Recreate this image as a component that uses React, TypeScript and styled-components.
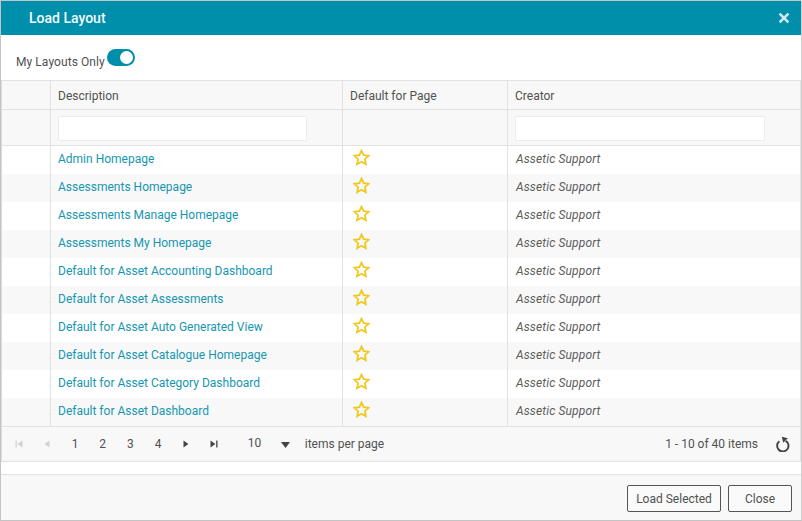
import { ReactElement } from 'react'
import styled, { createGlobalStyle } from 'styled-components'

const teal = '#008fab'
const line = '#e2e2e2'
const text = '#515151'

const layouts = [
  'Admin Homepage',
  'Assessments Homepage',
  'Assessments Manage Homepage',
  'Assessments My Homepage',
  'Default for Asset Accounting Dashboard',
  'Default for Asset Assessments',
  'Default for Asset Auto Generated View',
  'Default for Asset Catalogue Homepage',
  'Default for Asset Category Dashboard',
  'Default for Asset Dashboard',
]

const GlobalStyle = createGlobalStyle`
  html, body {
    margin: 0;
    padding: 0;
    background: #fff;
  }
  * {
    box-sizing: border-box;
  }
`

const StarIcon = () => (
  <StarSvg viewBox="0 0 17 17" width="17" height="17">
    <path
      d="M8.5 1.6l2.1 4.6 5 .6-3.7 3.4 1 5L8.5 12.8l-4.4 2.4 1-5L1.4 6.8l5-.6z"
      fill="none"
      stroke="#f2c81e"
      strokeWidth="1.8"
      strokeLinejoin="miter"
    />
  </StarSvg>
)

const PagerArrow = ({ kind, disabled }: { kind: 'first' | 'prev' | 'next' | 'last'; disabled?: boolean }) => (
  <PagerButton $disabled={disabled}>
    <svg viewBox="0 0 10 10" width="10" height="10" fill="currentColor">
      {kind === 'first' && <path d="M1.5 1.5h1.3v7H1.5zM8.5 1.5v7L3.6 5z" />}
      {kind === 'prev' && <path d="M7.5 1.5v7L2.6 5z" />}
      {kind === 'next' && <path d="M2.5 1.5v7L7.4 5z" />}
      {kind === 'last' && <path d="M8.5 1.5H7.2v7h1.3zM1.5 1.5v7L6.4 5z" />}
    </svg>
  </PagerButton>
)

const App = (): ReactElement => (
  <>
    <GlobalStyle />
    <Dialog>
      <TitleBar>
        <Title>Load Layout</Title>
        <CloseIcon viewBox="0 0 12 12" width="12" height="12">
          <path d="M1.6 1.6l8.8 8.8M10.4 1.6l-8.8 8.8" stroke="#cfe9ef" strokeWidth="2.6" fill="none" />
        </CloseIcon>
      </TitleBar>

      <Toolbar>
        <ToggleLabel>My Layouts Only</ToggleLabel>
        <Toggle>
          <ToggleKnob />
        </Toggle>
      </Toolbar>

      <Grid>
        <HeaderRow>
          <SelectCell />
          <DescriptionCell>Description</DescriptionCell>
          <DefaultCell>Default for Page</DefaultCell>
          <CreatorCell>Creator</CreatorCell>
        </HeaderRow>
        <FilterRow>
          <SelectCell />
          <DescriptionCell>
            <FilterInput $width={249} />
          </DescriptionCell>
          <DefaultCell />
          <CreatorCell>
            <FilterInput $width={250} />
          </CreatorCell>
        </FilterRow>
        {layouts.map((name, i) => (
          <DataRow key={name} $alt={i % 2 === 1}>
            <SelectCell />
            <DescriptionCell>
              <LayoutLink>{name}</LayoutLink>
            </DescriptionCell>
            <StarCell>
              <StarIcon />
            </StarCell>
            <CreatorCell>
              <CreatorName>Assetic Support</CreatorName>
            </CreatorCell>
          </DataRow>
        ))}
        <Pager>
          <PagerArrow kind="first" disabled />
          <PagerArrow kind="prev" disabled />
          {[1, 2, 3, 4].map(n => (
            <PageNumber key={n}>{n}</PageNumber>
          ))}
          <PagerArrow kind="next" />
          <PagerArrow kind="last" />
          <PageSize>
            <span>10</span>
            <svg viewBox="0 0 9 6" width="9" height="6" fill="#444">
              <path d="M0 0h9L4.5 6z" />
            </svg>
          </PageSize>
          <PagerText>items per page</PagerText>
          <PagerInfo>1 - 10 of 40 items</PagerInfo>
          <RefreshIcon viewBox="0 0 16 16" width="16" height="16">
            <path d="M4.4 5.2A5.7 5.7 0 1 0 10.6 4.8" fill="none" stroke="#444" strokeWidth="1.9" />
            <path d="M6.8 0.8l6 1.4-4.6 4.6z" fill="#444" />
          </RefreshIcon>
        </Pager>
      </Grid>

      <Footer>
        <FooterButton>Load Selected</FooterButton>
        <FooterButton $narrow>Close</FooterButton>
      </Footer>
    </Dialog>
  </>
)

export default App

const Dialog = styled.div`
  display: flex;
  flex-direction: column;
  width: 802px;
  height: 521px;
  border: 1px solid #c4c4c4;
  border-right-color: #d0d0d0;
  background: #fff;
  color: ${text};
  font-family: Roboto, 'Liberation Sans', sans-serif;
  font-size: 12px;
  overflow: hidden;
`

const TitleBar = styled.div`
  display: flex;
  align-items: center;
  justify-content: space-between;
  height: 34px;
  padding: 0 11px 0 28px;
  background: ${teal};
  flex: none;
`

const Title = styled.div`
  color: #f4fbfc;
  font-size: 14px;
  font-weight: 500;
`

const CloseIcon = styled.svg`
  display: block;
`

const Toolbar = styled.div`
  display: flex;
  align-items: flex-start;
  gap: 2px;
  height: 45px;
  padding: 14px 0 0 15px;
  flex: none;
`

const ToggleLabel = styled.span`
  margin-top: 6px;
  line-height: 14px;
  letter-spacing: 0.07px;
`

const Toggle = styled.div`
  position: relative;
  width: 28px;
  height: 17px;
  border-radius: 9px;
  background: ${teal};
`

const ToggleKnob = styled.span`
  position: absolute;
  top: 2px;
  right: 2px;
  width: 13px;
  height: 13px;
  border-radius: 50%;
  background: #fff;
`

const Grid = styled.div`
  border-top: 1px solid ${line};
  border-left: 1px solid #dcdcdc;
  border-right: 1px solid ${line};
  flex: none;
`

const Row = styled.div`
  display: grid;
  grid-template-columns: 49px 292px 165px 1fr;
`

const HeaderRow = styled(Row)`
  height: 29px;
  background: #f8f8f8;
  border-bottom: 1px solid ${line};
  & > div {
    padding-top: 2px;
  }
`

const FilterRow = styled(Row)`
  height: 36px;
  background: #f8f8f8;
  border-bottom: 1px solid ${line};
  & > div {
    padding-top: 2px;
  }
`

const DataRow = styled(Row)<{ $alt: boolean }>`
  height: 28px;
  background: ${p => (p.$alt ? '#f8f8f8' : '#fff')};
  & > div {
    padding-bottom: 2px;
  }
`

const Cell = styled.div`
  display: flex;
  align-items: center;
  min-width: 0;
  border-right: 1px solid ${line};
  padding-left: 7px;
`

const SelectCell = styled(Cell)``

const DescriptionCell = styled(Cell)``

const DefaultCell = styled(Cell)``

const StarCell = styled(Cell)`
  padding-left: 10px;
`

const CreatorCell = styled(Cell)`
  border-right: none;
`

const CreatorName = styled.em`
  margin-left: 1px;
  color: #5c5c5c;
  letter-spacing: 0.13px;
`

const StarSvg = styled.svg`
  display: block;
  margin-top: -3px;
`

const FilterInput = styled.div<{ $width: number }>`
  width: ${p => p.$width}px;
  height: 25px;
  background: #fff;
  border: 1px solid #ececec;
  border-radius: 1px;
`

const LayoutLink = styled.a`
  color: #1696b0;
  cursor: pointer;
`

const Pager = styled.div`
  display: flex;
  align-items: center;
  height: 36px;
  padding-left: 12px;
  padding-right: 9px;
  background: #f8f8f8;
  border-top: 1px solid ${line};
  border-bottom: 1px solid ${line};
`

const PagerButton = styled.span<{ $disabled?: boolean }>`
  display: flex;
  justify-content: center;
  width: 10px;
  margin-right: 18px;
  color: ${p => (p.$disabled ? '#d2d2d2' : '#444')};
`

const PageNumber = styled.span`
  width: 10px;
  margin-right: 17.7px;
  text-align: center;
`

const PageSize = styled.span`
  display: flex;
  align-items: center;
  justify-content: space-between;
  width: 42px;
  margin-left: 11px;
  padding-bottom: 3px;
  & svg {
    margin-top: 4px;
  }
`

const PagerText = styled.span`
  margin-left: 15px;
`

const PagerInfo = styled.span`
  margin-left: auto;
  margin-right: 17px;
`

const RefreshIcon = styled.svg`
  display: block;
`

const Footer = styled.div`
  display: flex;
  justify-content: flex-end;
  gap: 7px;
  height: 46px;
  margin-top: 12px;
  padding: 10px 9px 0 0;
  background: #f8f8f8;
  border-top: 1px solid ${line};
  flex: none;
`

const FooterButton = styled.button<{ $narrow?: boolean }>`
  width: ${p => (p.$narrow ? '64px' : '94px')};
  height: 27px;
  padding: 0;
  background: #fafafa;
  border: 1px solid #555;
  border-radius: 2px;
  color: ${text};
  font-family: inherit;
  font-size: 12px;
`
